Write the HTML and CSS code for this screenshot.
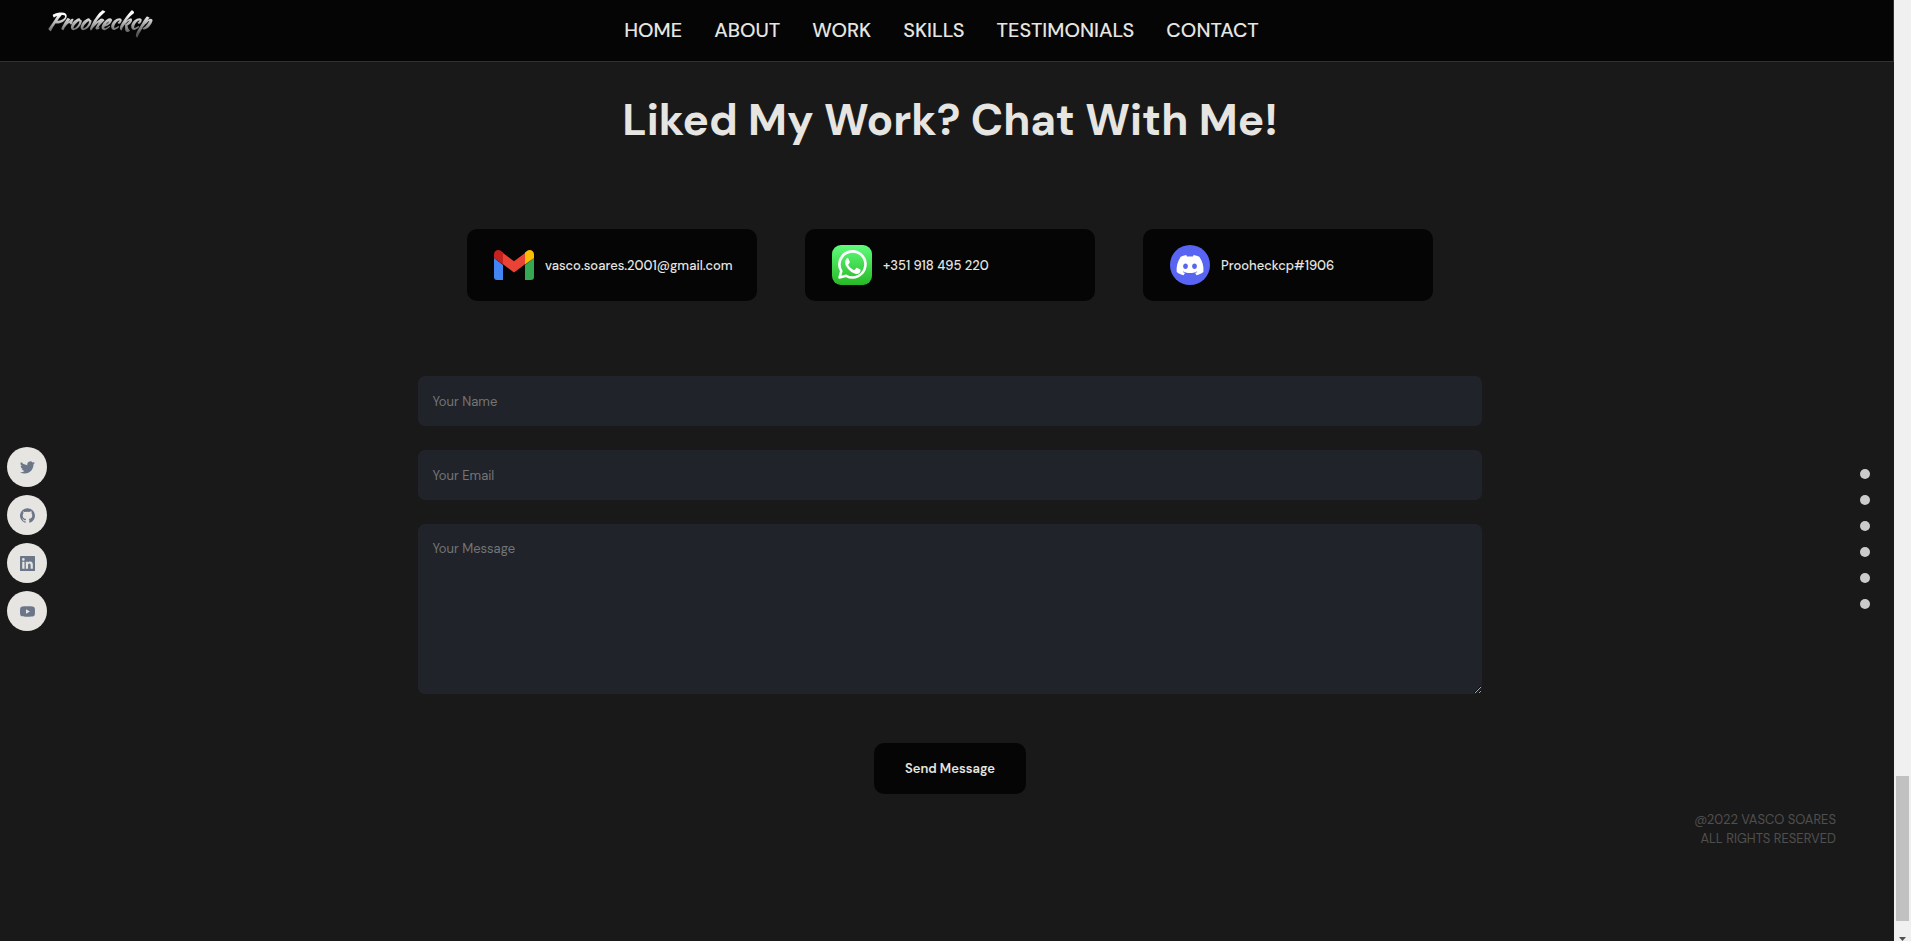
FILE: index.html
```html
<!DOCTYPE html>
<html lang="en">
    <head>
        <meta charset="UTF-8" />
        <meta name="viewport" content="width=device-width, initial-scale=1.0" />
        <title>Vasco Soares - Contact</title>
        <link rel="stylesheet" href="styles.css">
    </head>
    <body>
        <div class="page">
            <header class="navbar">
                <a class="logo" href="#home">Prooheckcp</a>
                <nav>
                    <a href="#home">Home</a>
                    <a href="#about">About</a>
                    <a href="#work">Work</a>
                    <a href="#skills">Skills</a>
                    <a href="#testimonials">Testimonials</a>
                    <a href="#contact">Contact</a>
                </nav>
            </header>

            <div class="content">
                <div class="social">
                    <a href="#twitter" aria-label="Twitter">
                        <svg viewBox="0 0 24 24"><path d="M23.95 4.57a10 10 0 0 1-2.82.77 4.96 4.96 0 0 0 2.16-2.72c-.95.55-2 .95-3.13 1.18a4.92 4.92 0 0 0-8.38 4.48A13.93 13.93 0 0 1 1.64 3.16a4.92 4.92 0 0 0 1.52 6.57 4.9 4.9 0 0 1-2.23-.61v.06a4.92 4.92 0 0 0 3.95 4.83 5 5 0 0 1-2.21.08 4.94 4.94 0 0 0 4.6 3.42A9.87 9.87 0 0 1 0 19.54a14 14 0 0 0 7.55 2.21c9.05 0 14-7.5 14-13.98 0-.21 0-.42-.02-.63a9.94 9.94 0 0 0 2.42-2.57z"/></svg>
                    </a>
                    <a href="#github" aria-label="GitHub">
                        <svg viewBox="0 0 24 24"><path d="M12 .3a12 12 0 0 0-3.8 23.38c.6.12.83-.26.83-.57L9 21.07c-3.34.72-4.04-1.61-4.04-1.61-.55-1.39-1.34-1.76-1.34-1.76-1.08-.74.09-.73.09-.73 1.2.09 1.83 1.24 1.83 1.24 1.08 1.83 2.81 1.3 3.5 1 .1-.78.42-1.31.76-1.61-2.67-.3-5.47-1.33-5.47-5.93 0-1.31.47-2.38 1.24-3.22-.14-.3-.54-1.52.1-3.18 0 0 1.01-.32 3.3 1.23a11.5 11.5 0 0 1 6.02 0c2.28-1.55 3.29-1.23 3.29-1.23.64 1.66.24 2.88.12 3.18a4.65 4.65 0 0 1 1.23 3.22c0 4.61-2.8 5.63-5.48 5.92.42.36.81 1.1.81 2.22l-.01 3.29c0 .31.2.69.82.57A12 12 0 0 0 12 .3z"/></svg>
                    </a>
                    <a href="#linkedin" aria-label="LinkedIn">
                        <svg viewBox="0 0 24 24"><path fill-rule="evenodd" d="M1 0h22a1 1 0 0 1 1 1v22a1 1 0 0 1-1 1H1a1 1 0 0 1-1-1V1a1 1 0 0 1 1-1zM3.600 9v11.400h3.600V9zM5.400 3.300a2.100 2.100 0 1 0 0 4.200 2.100 2.100 0 0 0 0-4.200zM9.300 9v11.400h3.600v-5.700c0-1.500.5-2.700 2.100-2.700s2 1.300 2 2.800v5.600h3.500v-6.300c0-3.100-.8-5.400-4.300-5.400-1.700 0-2.800.9-3.300 1.800V9z"/></svg>
                    </a>
                    <a href="#youtube" aria-label="YouTube">
                        <svg viewBox="0 0 24 24"><path fill-rule="evenodd" d="M23.500 6.500a3 3 0 0 0-2.100-2.100C19.500 3.600 12 3.600 12 3.600s-7.500 0-9.400.8A3 3 0 0 0 .5 6.500C0 8.400 0 12 0 12s0 3.700.5 5.600a3 3 0 0 0 2.100 2.100c1.900.7 9.400.7 9.400.7s7.500 0 9.400-.7a3 3 0 0 0 2.100-2.100c.5-1.900.5-5.600.5-5.600s0-3.600-.5-5.500zM9.600 15.500v-7l6.300 3.500z"/></svg>
                    </a>
                </div>

                <main>
                    <h1>Liked My Work? Chat With Me!</h1>

                    <div class="cards">
                        <a class="card" href="mailto:vasco.soares.2001@gmail.com">
                            <svg viewBox="0 0 40 40">
                                <path fill="#4285f4" d="M0 13l9 7v15H3a3 3 0 0 1-3-3z"/>
                                <path fill="#34a853" d="M31 20l9-7v19a3 3 0 0 1-3 3h-6z"/>
                                <path fill="#ea4335" d="M9 8l11 8.300L31 8v11.200l-11 8.300-11-8.300z"/>
                                <path fill="#c5221f" d="M0 13V9.500C0 5.300 4.500 3.800 7.400 6.300L9 7.500v12z"/>
                                <path fill="#fbbc04" d="M40 13V9.500c0-4.200-4.500-5.700-7.400-3.200L31 7.500v12z"/>
                            </svg>
                            <span>vasco.soares.2001@gmail.com</span>
                        </a>
                        <a class="card" href="tel:+351918495220">
                            <svg viewBox="0 0 40 40">
                                <defs>
                                    <linearGradient id="wa" x1="0" y1="0" x2="0" y2="1">
                                        <stop offset="0" stop-color="#5ffc7b"/>
                                        <stop offset="1" stop-color="#28b826"/>
                                    </linearGradient>
                                </defs>
                                <rect width="40" height="40" rx="9" fill="url(#wa)"/>
                                <path fill="none" stroke="#fff" stroke-width="2.600" stroke-linejoin="round" d="M7.500 32.500l1.800-6.400a13 13 0 1 1 4.900 4.700z"/>
                                <path fill="#fff" d="M15.200 13c.6 0 1 .1 1.300.8l1.200 2.900c.2.500.1.900-.2 1.300l-1 1.300c-.3.300-.3.600-.1 1 1.300 2.200 3 3.700 5.400 4.700.4.200.7.100 1-.2l1.300-1.600c.3-.4.600-.4 1.100-.2l2.700 1.300c.6.300.8.500.7 1.100-.2 2.400-2.200 3.500-4 3.500-1.600 0-4.700-1.300-7-3.500-2.600-2.500-4.500-5.200-4.500-7.700 0-1.700.7-3.300 2.100-4.700z"/>
                            </svg>
                            <span>+351 918 495 220</span>
                        </a>
                        <a class="card" href="#discord">
                            <svg viewBox="0 0 40 40">
                                <circle cx="20" cy="20" r="20" fill="#5865f2"/>
                                <path fill="#fff" fill-rule="evenodd" d="M29.300 11.700a22 22 0 0 0-5.600-1.700l-.9 1.600a21 21 0 0 0-5.800 0L16.200 10c-2 .3-3.800.9-5.500 1.700C7.200 16.900 6.200 22 6.700 27c2.300 1.700 4.600 2.700 6.800 3.300l1.500-2.300-2.300-1.100.6-.5c4.400 2.100 9.200 2.100 13.500 0l.6.500-2.300 1.100 1.500 2.300c2.200-.6 4.500-1.600 6.800-3.300.6-5.900-1-11-4.100-15.300zM15.500 24c-1.300 0-2.400-1.300-2.400-2.800s1-2.700 2.400-2.700 2.500 1.200 2.400 2.700c0 1.500-1 2.800-2.400 2.800zm9 0c-1.300 0-2.400-1.300-2.400-2.800s1-2.700 2.400-2.700 2.500 1.200 2.400 2.700c0 1.500-1 2.800-2.400 2.800z"/>
                            </svg>
                            <span>Prooheckcp#1906</span>
                        </a>
                    </div>

                    <form>
                        <input type="text" name="name" placeholder="Your Name" aria-label="Your Name" />
                        <input type="email" name="email" placeholder="Your Email" aria-label="Your Email" />
                        <textarea name="message" placeholder="Your Message" aria-label="Your Message"></textarea>
                        <button type="button">Send Message</button>
                    </form>

                    <footer>
                        <p>@2022 Vasco Soares</p>
                        <p>All rights reserved</p>
                    </footer>
                </main>

                <div class="dots">
                    <a href="#home" aria-label="Home"></a>
                    <a href="#about" aria-label="About"></a>
                    <a href="#work" aria-label="Work"></a>
                    <a href="#skills" aria-label="Skills"></a>
                    <a href="#testimonials" aria-label="Testimonials"></a>
                    <a href="#contact" aria-label="Contact"></a>
                </div>
            </div>
        </div>

        <div class="scrollbar">
            <div class="thumb"></div>
            <svg viewBox="0 0 7 4"><path d="M0 0h7L3.500 4z"/></svg>
        </div>
    </body>
</html>
```

FILE: styles.css
```css
* {
    box-sizing: border-box;
    margin: 0;
    padding: 0;
}
body {
    display: flex;
    height: 100vh;
    overflow: hidden;
    font-family: "DM Sans", Inter, "Open Sans", sans-serif;
    background-color: #191919;
    color: #e6e5e1;
}
a {
    color: inherit;
    text-decoration: none;
}
.page {
    flex: 1;
    display: flex;
    flex-direction: column;
}
.navbar {
    display: grid;
    grid-template-columns: 1fr auto 1fr;
    height: 62px;
    padding: 0 56px 0 46px;
    background-color: #050505;
    border: solid #303030;
    border-width: 0 1px 1px 0;
}
.logo {
    justify-self: start;
    align-self: start;
    padding: 8px 4px 8px 0;
    font-family: "Kaushan Script", "Dancing Script", "Liberation Serif", serif;
    font-size: 22px;
    font-style: italic;
    font-weight: bold;
    line-height: 26px;
    background: linear-gradient(#fff 35%, #555 80%);
    background-clip: text;
    -webkit-background-clip: text;
    color: transparent;
}
nav {
    display: flex;
    align-items: center;
    gap: 32px;
    padding-bottom: 2px;
    font-size: 20px;
    font-weight: 500;
    text-transform: uppercase;
}
.content {
    flex: 1;
    display: grid;
    grid-template-columns: 64px 1fr 58px;
}
.social,
.dots {
    display: flex;
    flex-direction: column;
    justify-content: center;
    padding-top: 75px;
}
.social {
    gap: 8px;
    padding-left: 7px;
}
.social a {
    display: flex;
    align-items: center;
    justify-content: center;
    width: 40px;
    height: 40px;
    border-radius: 50%;
    background-color: #e6e5e1;
}
.social svg {
    width: 15px;
    height: 15px;
    fill: #6b7688;
}
.dots {
    align-items: flex-end;
    gap: 16px;
    padding-right: 24px;
}
.dots a {
    width: 10px;
    height: 10px;
    border-radius: 50%;
    background-color: #cbcbcb;
}
main {
    display: flex;
    flex-direction: column;
    align-items: center;
    padding-top: 32px;
}
h1 {
    font-size: 44px;
    font-weight: 700;
    line-height: 52px;
}
.cards {
    display: flex;
    gap: 48px;
    margin-top: 83px;
}
.card {
    display: flex;
    align-items: center;
    gap: 11px;
    width: 290px;
    height: 72px;
    padding: 0 27px;
    border-radius: 10px;
    background-color: #050505;
    font-size: 13px;
    font-weight: 500;
}
.card svg {
    flex: none;
    width: 40px;
    height: 40px;
}
form {
    display: flex;
    flex-direction: column;
    align-items: center;
    gap: 24px;
    width: 60%;
    margin-top: 75px;
}
input,
textarea {
    width: 100%;
    padding: 15px 14px;
    border: none;
    border-radius: 7px;
    background-color: #20232a;
    color: #e6e5e1;
    font-family: inherit;
    font-size: 13px;
    line-height: 19px;
}
input {
    height: 50px;
}
textarea {
    height: 170px;
    resize: vertical;
}
input::placeholder,
textarea::placeholder {
    color: #757575;
}
button {
    height: 51px;
    margin-top: 25px;
    padding: 0 31px;
    border: none;
    border-radius: 10px;
    background-color: #050505;
    color: #e6e5e1;
    font-family: inherit;
    font-size: 13px;
    font-weight: 600;
    cursor: pointer;
}
footer {
    align-self: flex-end;
    margin-top: 16px;
    color: #4f4f4f;
    font-size: 13px;
    line-height: 19px;
    text-align: right;
    text-transform: uppercase;
}
.scrollbar {
    display: flex;
    flex-direction: column;
    align-items: center;
    justify-content: flex-end;
    width: 17px;
    background-color: #f0f0f0;
}
.thumb {
    width: 13px;
    height: 145px;
    background-color: #c1c1c1;
}
.scrollbar svg {
    width: 7px;
    height: 4px;
    margin-top: 16px;
    fill: #505050;
}
```
